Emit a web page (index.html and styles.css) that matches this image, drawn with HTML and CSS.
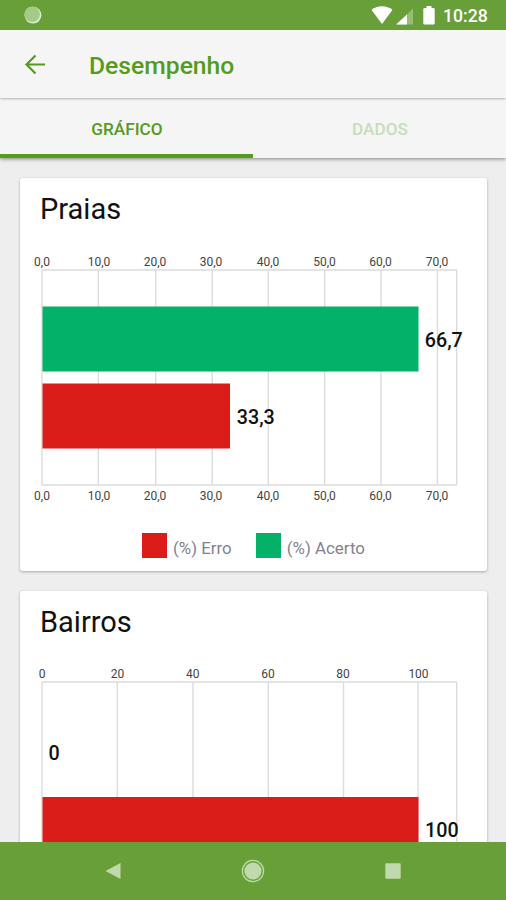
FILE: index.html
```html
<!DOCTYPE html>
<html lang="pt-BR">

<head>
    <meta charset="UTF-8">
    <meta name="viewport" content="width=device-width, initial-scale=1.0">
    <title>Desempenho</title>
    <link rel="stylesheet" href="styles.css">
</head>

<body>
    <div class="status-bar">
        <svg class="status-sync" width="20" height="20" viewBox="0 0 20 20">
            <circle cx="10" cy="10.2" r="8.4" fill="#d9eccb" />
            <circle cx="9.1" cy="9.3" r="7.8" fill="#a3ca86" />
        </svg>
        <div class="status-icons">
            <svg width="58" height="20" viewBox="0 0 58 20">
                <path d="M-0.400 4.900 C5 0 15 0 20.400 4.900 L10 18.900 Z" fill="#fff" />
                <path d="M41 3.500 V19.500 H25 Z" fill="#94bf75" />
                <path d="M35 9.500 V19.500 H24 Z" fill="#fff" />
            </svg>
            <svg class="battery" width="12" height="20" viewBox="0 0 12 20">
                <path d="M3.500 3 V1 H8.500 V3 H10.500 Q11.700 3 11.700 4.200 V18.300 Q11.700 19.500 10.500 19.500 H1.500 Q0.300 19.500 0.300 18.300 V4.200 Q0.300 3 1.500 3 Z" fill="#fff" />
            </svg>
            <span class="clock">10:28</span>
        </div>
    </div>

    <header class="toolbar">
        <svg class="back" width="22" height="22" viewBox="0 0 22 22">
            <path d="M21 10.500 H3 M11.500 1.500 L2.500 10.500 L11.500 19.500" />
        </svg>
        <h1>Desempenho</h1>
    </header>

    <nav class="tabs">
        <a class="tab active">GRÁFICO</a>
        <a class="tab">DADOS</a>
    </nav>

    <main>
        <section class="card">
            <h2>Praias</h2>
            <svg class="chart" width="467" height="270" viewBox="20 240 467 270">
                <path class="grid" d="M42 270V485M98.300 270V485M155.700 270V485M212.200 270V485M268.300 270V485M324.700 270V485M381 270V485M437.400 270V485M456.700 270V485M42 270H457M42 485H457" />
                <rect class="acerto" x="42.500" y="306.500" width="376" height="65" />
                <rect class="erro" x="42.500" y="383.500" width="187.500" height="65" />
                <g class="axis">
                    <text x="42" y="266">0,0</text>
                    <text x="99" y="266">10,0</text>
                    <text x="155" y="266">20,0</text>
                    <text x="211" y="266">30,0</text>
                    <text x="268" y="266">40,0</text>
                    <text x="324.500" y="266">50,0</text>
                    <text x="380.500" y="266">60,0</text>
                    <text x="437" y="266">70,0</text>
                    <text x="42" y="500">0,0</text>
                    <text x="99" y="500">10,0</text>
                    <text x="155" y="500">20,0</text>
                    <text x="211" y="500">30,0</text>
                    <text x="268" y="500">40,0</text>
                    <text x="324.500" y="500">50,0</text>
                    <text x="380.500" y="500">60,0</text>
                    <text x="437" y="500">70,0</text>
                </g>
                <text class="value" x="424.800" y="347">66,7</text>
                <text class="value" x="236.800" y="423.500">33,3</text>
            </svg>
            <div class="legend">
                <span class="swatch swatch-erro"></span>
                <span class="label">(%) Erro</span>
                <span class="swatch swatch-acerto"></span>
                <span class="label">(%) Acerto</span>
            </div>
        </section>

        <section class="card">
            <h2>Bairros</h2>
            <svg class="chart" width="467" height="270" viewBox="20 653 467 270">
                <path class="grid" d="M42 682V898M117.300 682V898M193 682V898M268.300 682V898M343.500 682V898M418 682V898M456.700 682V898M42 682H457M42 898H457" />
                <rect class="erro" x="42.500" y="797" width="376" height="65" />
                <g class="axis">
                    <text x="42" y="678">0</text>
                    <text x="117.500" y="678">20</text>
                    <text x="192.700" y="678">40</text>
                    <text x="268" y="678">60</text>
                    <text x="343" y="678">80</text>
                    <text x="418.500" y="678">100</text>
                </g>
                <text class="value" x="48.500" y="760">0</text>
                <text class="value" x="425" y="837">100</text>
            </svg>
        </section>
    </main>

    <footer class="nav-bar">
        <svg width="16" height="18" viewBox="0 0 16 18">
            <path d="M15.500 1 V17 L0.500 9 Z" />
        </svg>
        <svg width="24" height="24" viewBox="0 0 24 24">
            <circle cx="12" cy="12" r="8.600" />
            <circle class="ring" cx="12" cy="12" r="10.600" />
        </svg>
        <svg width="16" height="16" viewBox="0 0 16 16">
            <rect x="0.300" y="0.300" width="15.400" height="15.400" rx="1" />
        </svg>
    </footer>
</body>

</html>
```
FILE: styles.css
```css
* {
    box-sizing: border-box;
}

body {
    display: flex;
    flex-direction: column;
    height: 900px;
    margin: 0;
    overflow: hidden;
    background-color: #eeeeee;
    font-family: Roboto, sans-serif;
}

svg {
    display: block;
    overflow: visible;
}

.status-bar {
    display: flex;
    flex: none;
    justify-content: space-between;
    align-items: center;
    height: 30px;
    padding: 0 18px 0 23px;
    background-color: #689f38;
}

.status-icons {
    display: flex;
    align-items: center;
}

.battery {
    margin-left: -7px;
}

.clock {
    width: 45px;
    margin-left: 8px;
    padding-top: 2px;
    color: #fff;
    font-size: 17.6px;
    font-weight: 500;
    line-height: 28px;
    white-space: nowrap;
}

.toolbar {
    display: flex;
    flex: none;
    align-items: center;
    z-index: 2;
    height: 68px;
    padding: 1px 24px 0;
    background-color: #f5f5f5;
    box-shadow: 0 0 3px rgba(0, 0, 0, 0.5);
    clip-path: inset(0 0 -3px 0);
}

.back {
    fill: none;
    stroke: #559b1c;
    stroke-width: 2.2;
}

h1 {
    margin: 2px 0 0 43px;
    color: #559b1c;
    font-size: 24.7px;
    font-weight: 500;
}

.tabs {
    display: flex;
    flex: none;
    z-index: 1;
    height: 60px;
    background-color: #f5f5f5;
    box-shadow: 0 1px 4px rgba(0, 0, 0, 0.45);
}

.tab {
    flex: 1;
    padding: 2px 0 0 1px;
    border-bottom: 4px solid transparent;
    color: #c9dcba;
    font-size: 17.2px;
    font-weight: 500;
    line-height: 58px;
    text-align: center;
}

.active {
    color: #559b1c;
    border-color: #559b1c;
}

main {
    flex: 1;
    min-height: 0;
    padding: 20px 19px 0 20px;
    overflow: hidden;
}

.card {
    height: 393px;
    margin-bottom: 20px;
    padding-top: 12px;
    background-color: #fff;
    border-radius: 3px;
    box-shadow: 0 1px 3px rgba(0, 0, 0, 0.3);
}

h2 {
    height: 50px;
    margin: 0;
    padding-left: 20px;
    color: #111;
    font-size: 29px;
    font-weight: 400;
    line-height: 38px;
}

.grid {
    fill: none;
    stroke: #dcdcdc;
    stroke-width: 1.4;
}

.acerto {
    fill: #03b169;
}

.erro {
    fill: #da1d19;
}

.axis {
    fill: #444;
    font-size: 12px;
    text-anchor: middle;
}

.value {
    fill: #111;
    font-size: 19.7px;
    font-weight: 500;
}

.legend {
    display: flex;
    align-items: center;
    padding: 23px 0 0 122px;
}

.swatch {
    width: 25px;
    height: 25px;
}

.swatch-erro {
    background-color: #da1d19;
}

.swatch-acerto {
    margin-left: 24px;
    background-color: #03b169;
}

.label {
    margin: 5px 0 0 6px;
    color: #85828f;
    font-size: 16.9px;
    line-height: 20px;
    white-space: nowrap;
}

.nav-bar {
    display: flex;
    flex: none;
    justify-content: space-between;
    align-items: center;
    z-index: 1;
    height: 58px;
    padding: 0 105px;
    background-color: #689f38;
    fill: #c0d9ad;
}

.ring {
    fill: none;
    stroke: #c0d9ad;
    stroke-width: 1.2;
}
```
